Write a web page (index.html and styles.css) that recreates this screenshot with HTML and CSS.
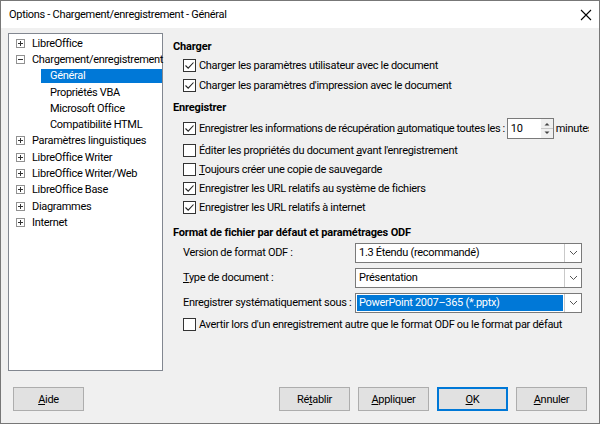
FILE: index.html
```html
<!DOCTYPE html>
<html lang="fr">
<head>
<meta charset="utf-8">
<title>Options</title>
<link rel="stylesheet" href="styles.css">
</head>
<body>
<div class="window">
  <div class="titlebar">
    <span class="title">Options - Chargement/enregistrement - Général</span>
    <svg class="close" width="12" height="12" viewBox="0 0 12 12"><path d="M1 1 L11 11 M11 1 L1 11" stroke="#000" stroke-width="1.1" fill="none"/></svg>
  </div>
  <div class="content">
    <div class="main">
      <div class="tree">
        <div class="node"><svg class="exp" width="9" height="9" viewBox="0 0 9 9"><rect x="0.5" y="0.5" width="8" height="8" fill="#fff" stroke="#919191"/><path d="M2 4.5 H7 M4.5 2 V7" stroke="#333"/></svg><span>LibreOffice</span></div>
        <div class="node"><svg class="exp" width="9" height="9" viewBox="0 0 9 9"><rect x="0.5" y="0.5" width="8" height="8" fill="#fff" stroke="#919191"/><path d="M2 4.5 H7" stroke="#333"/></svg><span>Chargement/enregistrement</span></div>
        <div class="node sub selected"><span>Général</span></div>
        <div class="node sub"><span>Propriétés VBA</span></div>
        <div class="node sub"><span>Microsoft Office</span></div>
        <div class="node sub"><span>Compatibilité HTML</span></div>
        <div class="node"><svg class="exp" width="9" height="9" viewBox="0 0 9 9"><rect x="0.5" y="0.5" width="8" height="8" fill="#fff" stroke="#919191"/><path d="M2 4.5 H7 M4.5 2 V7" stroke="#333"/></svg><span>Paramètres linguistiques</span></div>
        <div class="node"><svg class="exp" width="9" height="9" viewBox="0 0 9 9"><rect x="0.5" y="0.5" width="8" height="8" fill="#fff" stroke="#919191"/><path d="M2 4.5 H7 M4.5 2 V7" stroke="#333"/></svg><span>LibreOffice Writer</span></div>
        <div class="node"><svg class="exp" width="9" height="9" viewBox="0 0 9 9"><rect x="0.5" y="0.5" width="8" height="8" fill="#fff" stroke="#919191"/><path d="M2 4.5 H7 M4.5 2 V7" stroke="#333"/></svg><span>LibreOffice Writer/Web</span></div>
        <div class="node"><svg class="exp" width="9" height="9" viewBox="0 0 9 9"><rect x="0.5" y="0.5" width="8" height="8" fill="#fff" stroke="#919191"/><path d="M2 4.5 H7 M4.5 2 V7" stroke="#333"/></svg><span>LibreOffice Base</span></div>
        <div class="node"><svg class="exp" width="9" height="9" viewBox="0 0 9 9"><rect x="0.5" y="0.5" width="8" height="8" fill="#fff" stroke="#919191"/><path d="M2 4.5 H7 M4.5 2 V7" stroke="#333"/></svg><span>Diagrammes</span></div>
        <div class="node"><svg class="exp" width="9" height="9" viewBox="0 0 9 9"><rect x="0.5" y="0.5" width="8" height="8" fill="#fff" stroke="#919191"/><path d="M2 4.5 H7 M4.5 2 V7" stroke="#333"/></svg><span>Internet</span></div>
      </div>
      <div class="panel">
        <div class="head h1">Charger</div>
        <div class="row r20"><span class="cb"><svg width="13" height="13" viewBox="0 0 13 13"><rect x="0.5" y="0.5" width="12" height="12" fill="#fff" stroke="#333"/><path d="M2.5 6.5 L5.2 9.2 L10.5 3.5" stroke="#222" stroke-width="1.1" fill="none"/></svg></span><span class="txt">Charger les paramètres utilisateur avec le document</span></div>
        <div class="row r20"><span class="cb"><svg width="13" height="13" viewBox="0 0 13 13"><rect x="0.5" y="0.5" width="12" height="12" fill="#fff" stroke="#333"/><path d="M2.5 6.5 L5.2 9.2 L10.5 3.5" stroke="#222" stroke-width="1.1" fill="none"/></svg></span><span class="txt">Charger les paramètres d'impression avec le document</span></div>

        <div class="head h2">Enregistrer</div>
        <div class="row r24"><span class="cb"><svg width="13" height="13" viewBox="0 0 13 13"><rect x="0.5" y="0.5" width="12" height="12" fill="#fff" stroke="#333"/><path d="M2.5 6.5 L5.2 9.2 L10.5 3.5" stroke="#222" stroke-width="1.1" fill="none"/></svg></span><span class="txt tight">Enregistrer les informations de récupération <u>a</u>utomatique toutes les :</span><span class="spin"><span class="spinval">10</span><span class="spinbtns"><svg width="12" height="19" viewBox="0 0 12 19"><rect x="0" y="0" width="12" height="19" fill="#f0f0f0"/><path d="M0 9.5 H12" stroke="#c8c8c8"/><path d="M3.5 6.5 L6 4 L8.5 6.5 Z" fill="#444"/><path d="M3.5 12.5 L6 15 L8.5 12.5 Z" fill="#444"/></svg></span></span><span class="unit">minutes</span></div>
        <div class="row r20"><span class="cb"><svg width="13" height="13" viewBox="0 0 13 13"><rect x="0.5" y="0.5" width="12" height="12" fill="#fff" stroke="#333"/></svg></span><span class="txt">Éditer les propriétés du document <u>a</u>vant l'enregistrement</span></div>
        <div class="row r19"><span class="cb"><svg width="13" height="13" viewBox="0 0 13 13"><rect x="0.5" y="0.5" width="12" height="12" fill="#fff" stroke="#333"/></svg></span><span class="txt"><u>T</u>oujours créer une copie de sauvegarde</span></div>
        <div class="row r19"><span class="cb"><svg width="13" height="13" viewBox="0 0 13 13"><rect x="0.5" y="0.5" width="12" height="12" fill="#fff" stroke="#333"/><path d="M2.5 6.5 L5.2 9.2 L10.5 3.5" stroke="#222" stroke-width="1.1" fill="none"/></svg></span><span class="txt">Enregistrer les URL relatifs au système de fichiers</span></div>
        <div class="row r19"><span class="cb"><svg width="13" height="13" viewBox="0 0 13 13"><rect x="0.5" y="0.5" width="12" height="12" fill="#fff" stroke="#333"/><path d="M2.5 6.5 L5.2 9.2 L10.5 3.5" stroke="#222" stroke-width="1.1" fill="none"/></svg></span><span class="txt">Enregistrer les URL relatifs à internet</span></div>

        <div class="head h3">Format de fichier par défaut et paramétrages ODF</div>
        <div class="row r25"><span class="lbl">Version de format ODF :</span><span class="combo"><span class="cval">1.3 Étendu (recommandé)</span><span class="cbtn"><svg width="9" height="6" viewBox="0 0 9 6"><path d="M1 1 L4.5 4.5 L8 1" stroke="#555" fill="none"/></svg></span></span></div>
        <div class="row r25"><span class="lbl"><u>T</u>ype de document :</span><span class="combo"><span class="cval">Présentation</span><span class="cbtn"><svg width="9" height="6" viewBox="0 0 9 6"><path d="M1 1 L4.5 4.5 L8 1" stroke="#555" fill="none"/></svg></span></span></div>
        <div class="row r25"><span class="lbl">Enregistrer systématiquement sous :</span><span class="combo"><span class="cval sel">PowerPoint 2007–365 (*.pptx)</span><span class="cbtn"><svg width="9" height="6" viewBox="0 0 9 6"><path d="M1 1 L4.5 4.5 L8 1" stroke="#555" fill="none"/></svg></span></span></div>
        <div class="row r19"><span class="cb"><svg width="13" height="13" viewBox="0 0 13 13"><rect x="0.5" y="0.5" width="12" height="12" fill="#fff" stroke="#333"/></svg></span><span class="txt">Avertir lors d'un enregistrement autre que le format ODF ou le format par défaut</span></div>
      </div>
    </div>
    <div class="buttons">
      <button class="btn"><u>A</u>ide</button>
      <div class="right">
        <button class="btn">Ré<u>t</u>ablir</button>
        <button class="btn"><u>A</u>ppliquer</button>
        <button class="btn def"><u>O</u>K</button>
        <button class="btn"><u>A</u>nnuler</button>
      </div>
    </div>
  </div>
</div>
</body>
</html>
```

FILE: styles.css
```css
* { box-sizing: border-box; }
html, body { margin: 0; padding: 0; }
body {
  width: 600px;
  height: 424px;
  overflow: hidden;
  font-family: Roboto, "Liberation Sans", sans-serif;
  font-size: 11px;
  letter-spacing: -0.3px;
  color: #000;
  background: #f0f0f0;
}
.window {
  width: 600px;
  height: 424px;
  border: 1px solid #777;
  display: flex;
  flex-direction: column;
  background: #f0f0f0;
}
.titlebar {
  height: 27px;
  background: #fff;
  display: flex;
  align-items: center;
  justify-content: space-between;
  padding: 0 6px 0 8px;
  flex: none;
}
.title { white-space: nowrap; }
.close { display: block; margin-right: 1px; }
.content {
  flex: 1;
  display: flex;
  flex-direction: column;
  padding: 5px 7px 0 7px;
}
.main {
  display: flex;
  height: 338px;
  flex: none;
}
.tree {
  width: 155px;
  flex: none;
  background: #fff;
  border: 1px solid #828790;
  padding-top: 1px;
}
.node {
  height: 16.3px;
  display: flex;
  align-items: center;
  padding-left: 7px;
  white-space: nowrap;
}
.node .exp { flex: none; margin-right: 7px; }
.node.sub { padding-left: 32px; }
.node.sub span { padding-left: 9px; }
.node.selected span {
  flex: 1;
  align-self: stretch;
  margin: 1px 0 1px 0;
  background: #0078d7;
  color: #fff;
  display: flex;
  align-items: center;
}
.panel {
  flex: 1;
  padding-left: 10px;
  padding-top: 5px;
  overflow: hidden;
  margin-right: 3px;
  white-space: nowrap;
}
.head {
  font-weight: bold;
  letter-spacing: -0.15px;
  height: 17px;
  display: flex;
  align-items: center;
}
.h2 { margin-top: 4px; }
.h3 { margin-top: 7px; height: 16px; }
.row {
  display: flex;
  align-items: center;
  padding-left: 10px;
}
.txt { white-space: pre; }
.txt.tight { letter-spacing: -0.42px; }
.r19 { height: 19px; }
.r20 { height: 20px; }
.r24 { height: 24px; }
.r25 { height: 25px; }
.cb { display: flex; margin-right: 3px; flex: none; }
.cb svg { display: block; }
.spin {
  display: flex;
  align-items: center;
  width: 47px;
  height: 21px;
  border: 1px solid #7a7a7a;
  background: #fff;
  margin-left: 2px;
  flex: none;
}
.spinval { flex: 1; padding-left: 3px; }
.spinbtns { display: flex; padding-right: 0; }
.spinbtns svg { display: block; }
.unit { margin-left: 2px; }
.lbl { width: 172px; flex: none; }
.combo {
  display: flex;
  width: 227px;
  height: 20px;
  border: 1px solid #7a7a7a;
  background: #fff;
  flex: none;
}
.cval {
  flex: 1;
  display: flex;
  align-items: center;
  padding-left: 2px;
  margin: 1px;
}
.cval.sel { background: #0078d7; color: #fff; }
.cbtn {
  width: 17px;
  border-left: 1px solid #c9c9c9;
  display: flex;
  align-items: center;
  justify-content: center;
  background: #fff;
}
.buttons {
  display: flex;
  justify-content: space-between;
  margin-top: 16px;
  padding: 0 5px;
}
.right { display: flex; gap: 8px; }
.btn {
  width: 71px;
  height: 24px;
  border: 1px solid #adadad;
  background: #e1e1e1;
  font-family: inherit;
  font-size: 11px;
  letter-spacing: -0.3px;
  color: #000;
  padding: 0;
}
.btn.def { border: 2px solid #0078d7; }
```
